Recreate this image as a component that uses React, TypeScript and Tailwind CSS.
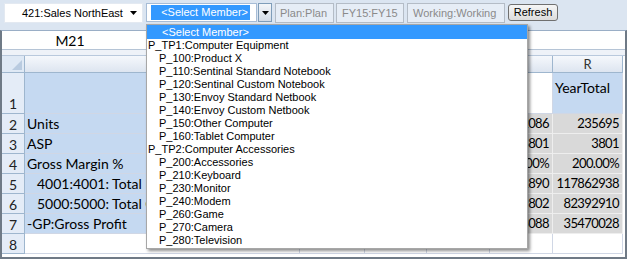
import React from 'react'

const uiFont = { fontFamily: '"Liberation Sans", Arial, sans-serif' }
const cellFont = { fontFamily: 'Lato, "Open Sans", sans-serif' }

interface Row {
  num: string
  label: string
  indent?: boolean
  q: string
  r: string
  kind: 'data' | 'blank'
}

const rows: Row[] = [
  { num: '2', label: 'Units', q: '232086', r: '235695', kind: 'data' },
  { num: '3', label: 'ASP', q: '3801', r: '3801', kind: 'data' },
  { num: '4', label: 'Gross Margin %', q: '200.00%', r: '200.00%', kind: 'data' },
  { num: '5', label: '4001:4001: Total Revenue', indent: true, q: '112890', r: '117862938', kind: 'data' },
  { num: '6', label: '5000:5000: Total Cost', indent: true, q: '79802', r: '82392910', kind: 'data' },
  { num: '7', label: '-GP:Gross Profit', q: '33088', r: '35470028', kind: 'data' },
  { num: '8', label: '', q: '', r: '', kind: 'blank' },
]

const members = [
  { name: 'P_TP1:Computer Equipment', level: 0 },
  { name: 'P_100:Product X', level: 1 },
  { name: 'P_110:Sentinal Standard Notebook', level: 1 },
  { name: 'P_120:Sentinal Custom Notebook', level: 1 },
  { name: 'P_130:Envoy Standard Netbook', level: 1 },
  { name: 'P_140:Envoy Custom Netbook', level: 1 },
  { name: 'P_150:Other Computer', level: 1 },
  { name: 'P_160:Tablet Computer', level: 1 },
  { name: 'P_TP2:Computer Accessories', level: 0 },
  { name: 'P_200:Accessories', level: 1 },
  { name: 'P_210:Keyboard', level: 1 },
  { name: 'P_230:Monitor', level: 1 },
  { name: 'P_240:Modem', level: 1 },
  { name: 'P_260:Game', level: 1 },
  { name: 'P_270:Camera', level: 1 },
  { name: 'P_280:Television', level: 1 },
]

function Caret() {
  return (
    <svg width="7" height="4" viewBox="0 0 7 4">
      <path d="M0 0h7L3.5 4z" fill="#000" />
    </svg>
  )
}

function Toolbar() {
  return (
    <div className="h-[30px] bg-[#dbe5f1] flex items-start pt-[3px] pl-[4px] text-[11px] leading-none" style={uiFont}>
      <div className="w-[139px] h-[20px] bg-white border border-[#e3e9f1] flex items-center pl-[17px] pr-[5px] justify-between text-black">
        <span>421:Sales NorthEast</span>
        <Caret />
      </div>
      <div className="ml-[3px] w-[111px] h-[19px] bg-white border border-[#a6bcd6] flex items-center pl-[4px]">
        <span className="bg-[#3399ff] text-white h-[15px] w-[99px] flex items-center justify-end pr-[2px]">&lt;Select Member&gt;</span>
      </div>
      <div className="ml-[1px] w-[14px] h-[19px] border border-[#7f9db9] bg-gradient-to-b from-[#f4f6f9] to-[#d3dbe6] flex items-center justify-center">
        <Caret />
      </div>
      <div className="ml-[3px] w-[59px] h-[20px] border border-[#b4bcc6] bg-[#e6edf6] text-[#8a8a8a] flex items-center pl-[4px]">Plan:Plan</div>
      <div className="ml-[2px] w-[68px] h-[20px] border border-[#b4bcc6] bg-[#e6edf6] text-[#8a8a8a] flex items-center pl-[5px]">FY15:FY15</div>
      <div className="ml-[3px] w-[98px] h-[20px] border border-[#b4bcc6] bg-[#e6edf6] text-[#8a8a8a] flex items-center pl-[5px]">Working:Working</div>
      <button className="ml-[3px] mt-[1px] w-[50px] h-[17px] border border-[#707070] rounded-[3px] bg-gradient-to-b from-[#f6f6f6] to-[#dcdcdc] text-black text-[11px] leading-none">
        Refresh
      </button>
    </div>
  )
}

function Grid() {
  const cell = 'border-r border-b border-[#d0d7e5]'
  const rowHead = 'border-r border-b border-[#9eb6ce] bg-[#e4ecf7] flex items-end justify-center text-[#222] pb-[1px]'
  const num = 'flex items-center justify-end pr-[3px] text-[13px] tracking-[-0.6px] whitespace-nowrap'
  // column letters under the open list are not visible, only R shows
  const cols = ['', '', '', '', '', 'R']
  return (
    <div className="grid grid-cols-[23px_275px_65px_62px_63px_63px_70px] text-[14px] leading-none text-black" style={cellFont}>
      <div className="h-[17px] border-r border-b border-[#9eb6ce] bg-[#dfe9f5] flex items-end justify-end p-[2px]">
        <svg width="10" height="10" viewBox="0 0 10 10">
          <path d="M10 0v10H0z" fill="#b9cbe0" />
        </svg>
      </div>
      {cols.map((c, i) => (
        <div key={i} className="h-[17px] border-r border-b border-[#9eb6ce] bg-gradient-to-b from-[#f5f8fc] to-[#dde5f0] flex items-center justify-center text-[13px] text-[#333]">
          {c}
        </div>
      ))}

      <div className={`h-[41px] ${rowHead} pb-[2px]`}>1</div>
      <div className={`${cell} bg-[#c5d9f1]`} />
      <div className={cell} />
      <div className={cell} />
      <div className={cell} />
      <div className={cell} />
      <div className={`${cell} bg-[#c5d9f1] pl-[2px] pt-[8px]`}>YearTotal</div>

      {rows.map((r) => {
        const dataBg = r.kind === 'data' ? 'bg-[#d9d9d9] border-[#eeeeee]' : ''
        return (
          <React.Fragment key={r.num}>
            <div className={`h-[20px] ${rowHead}`}>{r.num}</div>
            <div className={`${cell} ${r.kind === 'data' ? 'bg-[#c5d9f1]' : ''} flex items-center whitespace-nowrap overflow-hidden ${r.indent ? 'pl-[12px]' : 'pl-[2px]'}`}>
              {r.label}
            </div>
            <div className={`${cell} ${dataBg}`} />
            <div className={`${cell} ${dataBg}`} />
            <div className={`${cell} ${dataBg}`} />
            <div className={`${cell} ${dataBg} ${num}`}>{r.q}</div>
            <div className={`${cell} ${dataBg} ${num}`}>{r.r}</div>
          </React.Fragment>
        )
      })}
    </div>
  )
}

function MemberList() {
  return (
    <div className="absolute left-[146px] top-[24px] w-[382px] bg-white border border-[#a7a7a7] shadow-[2px_2px_3px_rgba(0,0,0,0.45)] text-[11px] text-black pb-[1px]" style={uiFont}>
      <div className="h-[14px] bg-[#3399ff] text-white flex items-center pl-[15px]">&lt;Select Member&gt;</div>
      {members.map((m) => (
        <div key={m.name} className={`h-[13px] flex items-center whitespace-nowrap ${m.level === 0 ? 'pl-[1px]' : 'pl-[12px]'}`}>
          {m.name}
        </div>
      ))}
    </div>
  )
}

export default function App() {
  return (
    <div className="w-[627px] h-[259px] relative overflow-hidden bg-white">
      <Toolbar />
      <div className="h-[229px] border-l-2 border-r-2 border-b-2 border-t border-[#6f7a86] border-t-[#9aaec6] overflow-hidden">
        <div className="h-[19px] flex items-center bg-white border-b border-[#b5c4d6]">
          <div className="w-[136px] text-center text-[14px]" style={cellFont}>M21</div>
        </div>
        <div className="h-[6px] bg-[#eef2f8] border-b border-[#b9c9dd]" />
        <Grid />
      </div>
      <MemberList />
    </div>
  )
}
